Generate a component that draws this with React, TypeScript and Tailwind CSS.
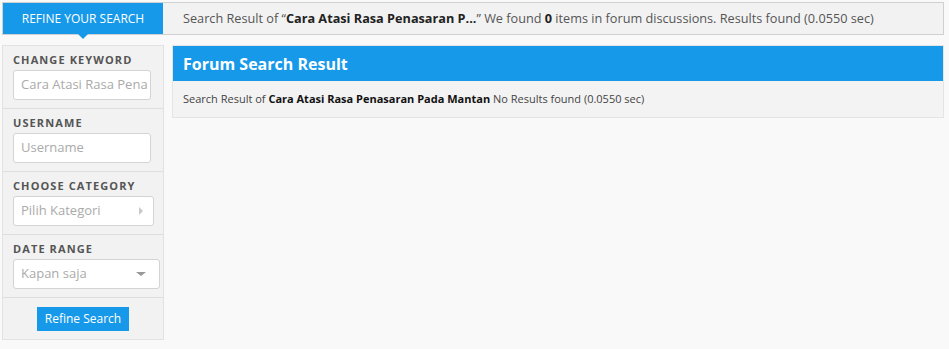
import React from "react";

const font = { fontFamily: '"Open Sans", "Noto Sans", sans-serif' };

function Label({ children }: { children: React.ReactNode }) {
  return (
    <div className="h-[16px] text-[11px] leading-[12px] font-bold tracking-[1.1px] text-[#555] uppercase">
      {children}
    </div>
  );
}

export default function App() {
  return (
    <div className="w-[949px] h-[349px] bg-[#f9f9f9] p-[2px]" style={font}>
      <div className="relative flex h-[33px] w-[942px] border border-[#d0d0d0] bg-[#f2f2f2]">
        <div className="relative flex w-[160px] items-center justify-center bg-[#1799ea] text-[12px] text-white uppercase">
          Refine your search
          <div className="absolute left-1/2 top-full -translate-x-1/2 h-0 w-0 border-x-[5px] border-t-[5px] border-x-transparent border-t-[#1799ea]" />
        </div>
        <div className="flex items-center pl-[20px] text-[12.7px] text-[#555]">
          <span>
            Search Result of “<b className="text-[#222]">Cara Atasi Rasa Penasaran P...</b>” We found{" "}
            <b className="text-[#222]">0</b> items in forum discussions. Results found (0.0550 sec)
          </span>
        </div>
      </div>
      <div className="mt-[10px] flex gap-[8px]">
        <div className="w-[162px] border border-[#e2e2e2] bg-[#f2f2f2]">
          <div className="border-b border-[#dedede] px-[10px] pt-[8px] pb-[8px]">
            <Label>Change Keyword</Label>
            <div className="flex h-[30px] w-[138px] items-center overflow-hidden whitespace-nowrap rounded-[3px] border border-[#d4d4d4] bg-white pl-[7px] text-[13px] text-[#aaa]">
              Cara Atasi Rasa Pena
            </div>
          </div>
          <div className="border-b border-[#dedede] px-[10px] pt-[8px] pb-[8px]">
            <Label>Username</Label>
            <div className="flex h-[30px] w-[138px] items-center rounded-[3px] border border-[#d4d4d4] bg-white pl-[7px] text-[13px] text-[#aaa]">
              Username
            </div>
          </div>
          <div className="border-b border-[#dedede] px-[10px] pt-[8px] pb-[8px]">
            <Label>Choose Category</Label>
            <div className="flex h-[30px] w-[141px] items-center justify-between rounded-[3px] border border-[#d4d4d4] bg-white pl-[7px] pr-[10px] text-[13px] text-[#aaa]">
              <span>Pilih Kategori</span>
              <div className="h-0 w-0 border-y-[4px] border-l-[4px] border-y-transparent border-l-[#c8c8c8]" />
            </div>
          </div>
          <div className="border-b border-[#dedede] px-[10px] pt-[8px] pb-[8px]">
            <Label>Date Range</Label>
            <div className="flex h-[30px] w-[147px] items-center justify-between rounded-[3px] border border-[#d4d4d4] bg-white pl-[7px] pr-[13px] text-[13px] text-[#aaa]">
              <span>Kapan saja</span>
              <div className="h-0 w-0 border-x-[5px] border-t-[4px] border-x-transparent border-t-[#999]" />
            </div>
          </div>
          <div className="flex justify-center pt-[9px] pb-[8px]">
            <button className="h-[24px] w-[92px] bg-[#1799ea] text-[12px] text-white">Refine Search</button>
          </div>
        </div>
        <div className="h-[73px] w-[772px] border border-[#e4e4e4] bg-[#f3f3f3] self-start">
          <div className="flex h-[35px] items-center bg-[#1799ea] pl-[10px] text-[16px] font-bold text-white">
            Forum Search Result
          </div>
          <div className="flex h-[36px] items-center pl-[10px] text-[11px] text-[#444]">
            <span>
              Search Result of <b className="text-[#111]">Cara Atasi Rasa Penasaran Pada Mantan</b> No Results found (0.0550 sec)
            </span>
          </div>
        </div>
      </div>
    </div>
  );
}
